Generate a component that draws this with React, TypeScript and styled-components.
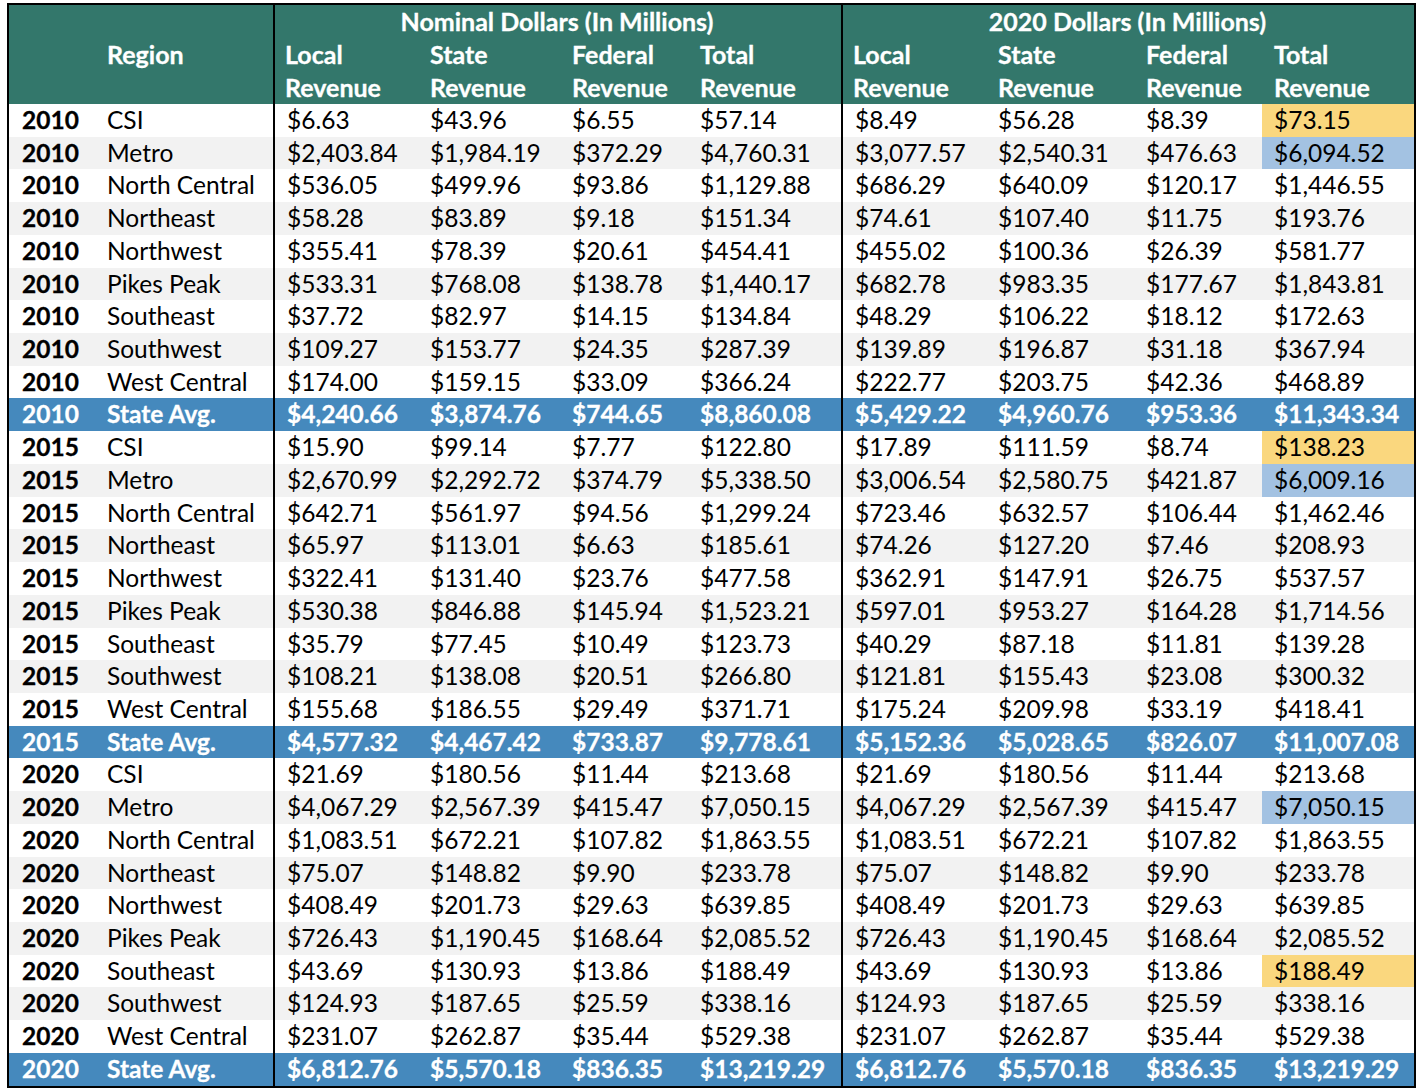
import React from "react";
import styled, { createGlobalStyle } from "styled-components";

const GlobalStyle = createGlobalStyle`
  html, body {
    margin: 0;
    padding: 0;
    background: #ffffff;
  }
  body {
    font-family: Lato, "Open Sans", "Liberation Sans", sans-serif;
  }
`;

const COLUMNS = "86px 178px 145px 142px 128px 153px 145px 148px 128px 152px";

type Highlight = "yellow" | "blue" | undefined;

interface DataRow {
  year: string;
  region: string;
  values: string[];
  mark?: Highlight;
  avg?: boolean;
}

const regions = [
  "CSI",
  "Metro",
  "North Central",
  "Northeast",
  "Northwest",
  "Pikes Peak",
  "Southeast",
  "Southwest",
  "West Central",
  "State Avg.",
];

const raw: Record<string, string[][]> = {
  "2010": [
    ["$6.63", "$43.96", "$6.55", "$57.14", "$8.49", "$56.28", "$8.39", "$73.15"],
    ["$2,403.84", "$1,984.19", "$372.29", "$4,760.31", "$3,077.57", "$2,540.31", "$476.63", "$6,094.52"],
    ["$536.05", "$499.96", "$93.86", "$1,129.88", "$686.29", "$640.09", "$120.17", "$1,446.55"],
    ["$58.28", "$83.89", "$9.18", "$151.34", "$74.61", "$107.40", "$11.75", "$193.76"],
    ["$355.41", "$78.39", "$20.61", "$454.41", "$455.02", "$100.36", "$26.39", "$581.77"],
    ["$533.31", "$768.08", "$138.78", "$1,440.17", "$682.78", "$983.35", "$177.67", "$1,843.81"],
    ["$37.72", "$82.97", "$14.15", "$134.84", "$48.29", "$106.22", "$18.12", "$172.63"],
    ["$109.27", "$153.77", "$24.35", "$287.39", "$139.89", "$196.87", "$31.18", "$367.94"],
    ["$174.00", "$159.15", "$33.09", "$366.24", "$222.77", "$203.75", "$42.36", "$468.89"],
    ["$4,240.66", "$3,874.76", "$744.65", "$8,860.08", "$5,429.22", "$4,960.76", "$953.36", "$11,343.34"],
  ],
  "2015": [
    ["$15.90", "$99.14", "$7.77", "$122.80", "$17.89", "$111.59", "$8.74", "$138.23"],
    ["$2,670.99", "$2,292.72", "$374.79", "$5,338.50", "$3,006.54", "$2,580.75", "$421.87", "$6,009.16"],
    ["$642.71", "$561.97", "$94.56", "$1,299.24", "$723.46", "$632.57", "$106.44", "$1,462.46"],
    ["$65.97", "$113.01", "$6.63", "$185.61", "$74.26", "$127.20", "$7.46", "$208.93"],
    ["$322.41", "$131.40", "$23.76", "$477.58", "$362.91", "$147.91", "$26.75", "$537.57"],
    ["$530.38", "$846.88", "$145.94", "$1,523.21", "$597.01", "$953.27", "$164.28", "$1,714.56"],
    ["$35.79", "$77.45", "$10.49", "$123.73", "$40.29", "$87.18", "$11.81", "$139.28"],
    ["$108.21", "$138.08", "$20.51", "$266.80", "$121.81", "$155.43", "$23.08", "$300.32"],
    ["$155.68", "$186.55", "$29.49", "$371.71", "$175.24", "$209.98", "$33.19", "$418.41"],
    ["$4,577.32", "$4,467.42", "$733.87", "$9,778.61", "$5,152.36", "$5,028.65", "$826.07", "$11,007.08"],
  ],
  "2020": [
    ["$21.69", "$180.56", "$11.44", "$213.68", "$21.69", "$180.56", "$11.44", "$213.68"],
    ["$4,067.29", "$2,567.39", "$415.47", "$7,050.15", "$4,067.29", "$2,567.39", "$415.47", "$7,050.15"],
    ["$1,083.51", "$672.21", "$107.82", "$1,863.55", "$1,083.51", "$672.21", "$107.82", "$1,863.55"],
    ["$75.07", "$148.82", "$9.90", "$233.78", "$75.07", "$148.82", "$9.90", "$233.78"],
    ["$408.49", "$201.73", "$29.63", "$639.85", "$408.49", "$201.73", "$29.63", "$639.85"],
    ["$726.43", "$1,190.45", "$168.64", "$2,085.52", "$726.43", "$1,190.45", "$168.64", "$2,085.52"],
    ["$43.69", "$130.93", "$13.86", "$188.49", "$43.69", "$130.93", "$13.86", "$188.49"],
    ["$124.93", "$187.65", "$25.59", "$338.16", "$124.93", "$187.65", "$25.59", "$338.16"],
    ["$231.07", "$262.87", "$35.44", "$529.38", "$231.07", "$262.87", "$35.44", "$529.38"],
    ["$6,812.76", "$5,570.18", "$836.35", "$13,219.29", "$6,812.76", "$5,570.18", "$836.35", "$13,219.29"],
  ],
};

const marks: Record<string, Highlight> = {
  "2010-CSI": "yellow",
  "2010-Metro": "blue",
  "2015-CSI": "yellow",
  "2015-Metro": "blue",
  "2020-Metro": "blue",
  "2020-Southeast": "yellow",
};

const rows: DataRow[] = Object.keys(raw).flatMap((year) =>
  raw[year].map((values, i) => ({
    year,
    region: regions[i],
    values,
    mark: marks[`${year}-${regions[i]}`],
    avg: i === 9,
  }))
);

const Table = styled.div`
  margin: 3px 0 0 7px;
  width: 1409px;
  border: 2px solid #000;
  box-sizing: border-box;
  font-size: 24.5px;
  color: #000;
`;

const Header = styled.div`
  display: grid;
  grid-template-columns: ${COLUMNS};
  grid-template-rows: 33px 33px 33px;
  background: #33776b;
  color: #ffffff;
  font-size: 25px;
  font-weight: 700;
`;

const HeadCell = styled.div<{ $col: number; $row: number; $span?: number; $center?: boolean }>`
  grid-column: ${(p) => p.$col} / span ${(p) => p.$span ?? 1};
  grid-row: ${(p) => p.$row};
  padding-left: ${(p) => (p.$center ? 0 : 12)}px;
  line-height: 33px;
  white-space: nowrap;
  text-align: ${(p) => (p.$center ? "center" : "left")};
  -webkit-text-stroke: 0.3px #ffffff;
`;

const Divider = styled.div<{ $col: number }>`
  grid-column: ${(p) => p.$col};
  grid-row: 1 / span 3;
  border-left: 2px solid #000;
`;

const Row = styled.div<{ $shade: boolean; $avg: boolean }>`
  display: grid;
  grid-template-columns: ${COLUMNS};
  height: 32.73px;
  background: ${(p) => (p.$avg ? "#4589bd" : p.$shade ? "#f2f2f2" : "#ffffff")};
  color: ${(p) => (p.$avg ? "#ffffff" : "#000000")};
  font-weight: ${(p) => (p.$avg ? 700 : 400)};
  -webkit-text-stroke: ${(p) => (p.$avg ? "0.3px #ffffff" : "0")};
`;

const Cell = styled.div<{ $divider?: boolean; $mark?: Highlight }>`
  line-height: 32.73px;
  padding-left: 12px;
  white-space: nowrap;
  border-left: ${(p) => (p.$divider ? "2px solid #000" : "none")};
  background: ${(p) =>
    p.$mark === "yellow" ? "#fad77e" : p.$mark === "blue" ? "#a3c2e2" : "transparent"};
`;

const YearCell = styled(Cell)`
  padding-left: 13px;
  font-weight: 700;
  -webkit-text-stroke: 0.3px currentColor;
`;

const subHeads = [
  ["Local", "Revenue"],
  ["State", "Revenue"],
  ["Federal", "Revenue"],
  ["Total", "Revenue"],
];

export default function App() {
  return (
    <>
      <GlobalStyle />
      <Table>
        <Header>
          <Divider $col={3} />
          <Divider $col={7} />
          <HeadCell $col={3} $row={1} $span={4} $center>
            Nominal Dollars (In Millions)
          </HeadCell>
          <HeadCell $col={7} $row={1} $span={4} $center>
            2020 Dollars (In Millions)
          </HeadCell>
          <HeadCell $col={2} $row={2}>
            Region
          </HeadCell>
          {[0, 1].flatMap((g) =>
            subHeads.flatMap(([top, bottom], i) => [
              <HeadCell key={`${g}-${i}-t`} $col={3 + g * 4 + i} $row={2}>
                {top}
              </HeadCell>,
              <HeadCell key={`${g}-${i}-b`} $col={3 + g * 4 + i} $row={3}>
                {bottom}
              </HeadCell>,
            ])
          )}
        </Header>
        {rows.map((r, idx) => (
          <Row key={idx} $avg={!!r.avg} $shade={idx % 10 % 2 === 1}>
            <YearCell>{r.year}</YearCell>
            <Cell>{r.region}</Cell>
            {r.values.map((v, i) => (
              <Cell key={i} $divider={i === 0 || i === 4} $mark={i === 7 ? r.mark : undefined}>
                {v}
              </Cell>
            ))}
          </Row>
        ))}
      </Table>
    </>
  );
}
